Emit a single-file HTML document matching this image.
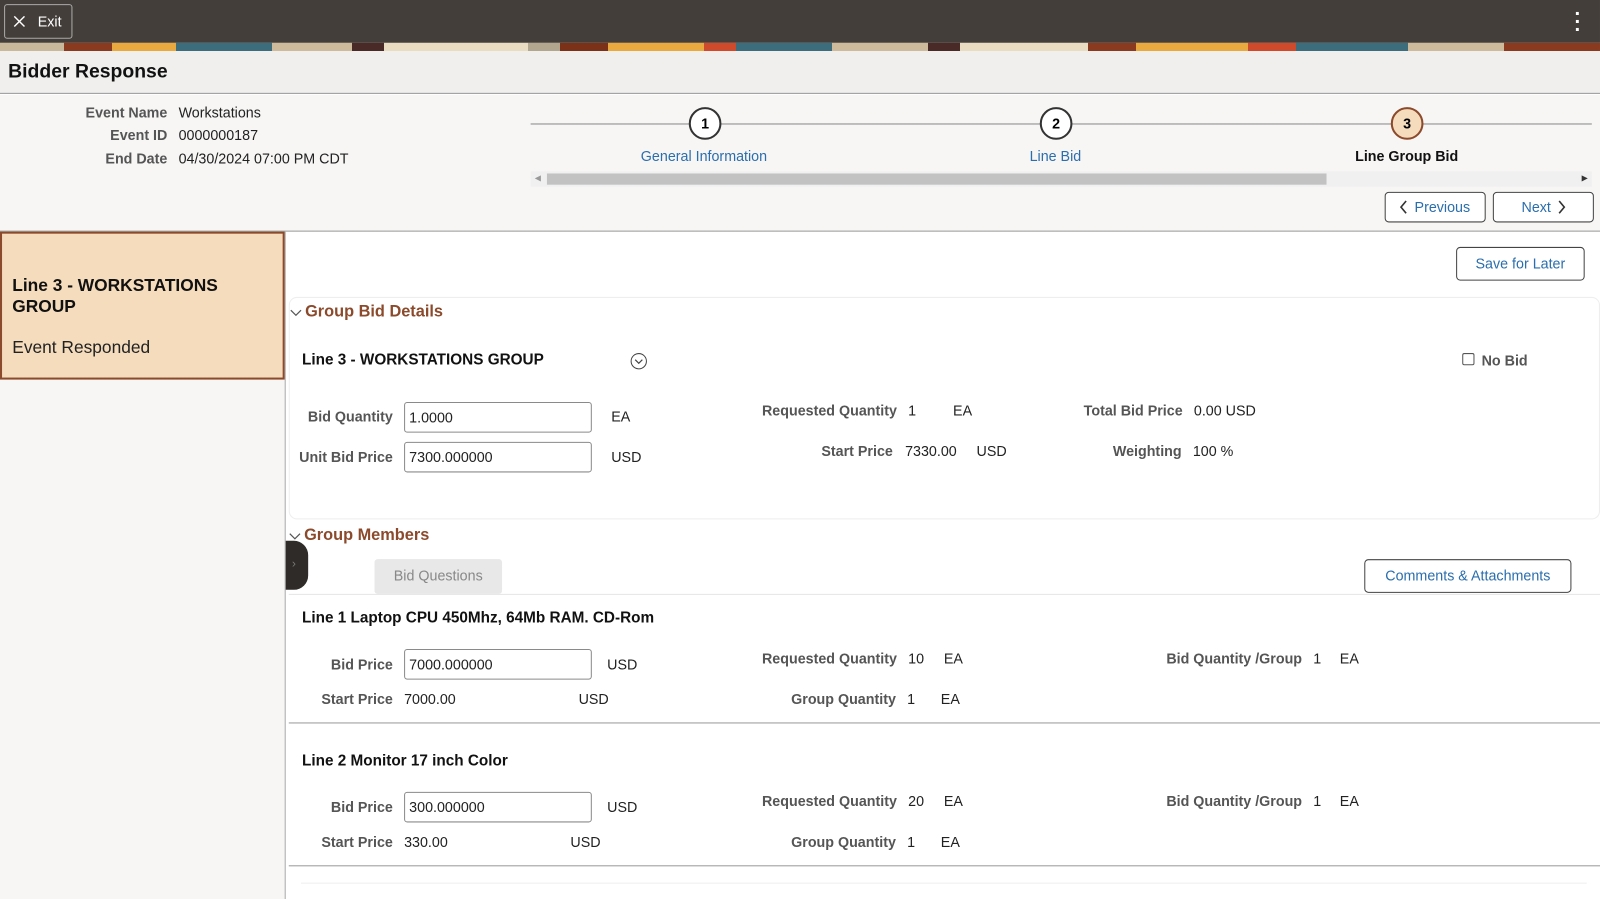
<!DOCTYPE html>
<html><head><meta charset="utf-8"><style>
*{margin:0;padding:0;box-sizing:border-box}
html,body{width:1600px;height:899px;overflow:hidden;background:#fff;font-family:"Liberation Sans",Arial,sans-serif}
#w{position:absolute;left:0;top:0;width:1568px;height:881px;transform:scale(1.0204);transform-origin:0 0;background:#fff}
.a{position:absolute;white-space:nowrap}
.lb{font-weight:bold;color:#555;font-size:14px;text-align:right}
.v{color:#222;font-size:14px}
.in{position:absolute;border:1px solid #8a8a8a;border-radius:3px;height:30px;background:#fff;font-size:14px;color:#222;padding:6px 4px}
.btn{position:absolute;border:1px solid #444;border-radius:4px;background:#fff;color:#2a6ead;font-size:14px;text-align:center}
.sec{color:#8b4a2b;font-weight:bold;font-size:16px}
.h{font-weight:bold;font-size:15px;color:#111}
</style></head><body><div id="w">
<div class="a" style="left:0;top:0;width:1568px;height:42px;background:#433e39"></div>
<div class="a" style="left:0;top:42px;width:1568px;height:8px;background:linear-gradient(90deg,#c9b89a 0 4%,#8a3a1e 4% 7%,#e9a93e 7% 11%,#3b6d7c 11% 17%,#cdbb9b 17% 22%,#4a2a26 22% 24%,#e9dcc1 24% 33%,#b2a68e 33% 35%,#7a3118 35% 38%,#e9a93e 38% 44%,#cf4a2a 44% 46%,#3b6d7c 46% 52%,#cdbb9b 52% 58%,#4a2a26 58% 60%,#e9dcc1 60% 68%,#8a3a1e 68% 71%,#e9a93e 71% 78%,#cf4a2a 78% 81%,#3b6d7c 81% 88%,#cdbb9b 88% 94%,#8a3a1e 94% 100%)"></div>
<div class="a" style="left:4px;top:4px;width:67px;height:34px;border:1px solid #aaa;border-radius:3px;color:#fff;font-size:14px;padding:8px 0 0 32px">Exit</div>
<svg class="a" style="left:13px;top:15px" width="12" height="12"><path d="M1 1L11 11M11 1L1 11" stroke="#fff" stroke-width="1.4"/></svg>
<div class="a" style="left:1543px;top:10px;color:#fff;font-size:20px;line-height:8px;font-weight:bold">·<br>·<br>·</div>
<div class="a" style="left:0;top:50px;width:1568px;height:42px;background:#f0efee;border-bottom:1px solid #999"></div>
<div class="a" style="left:8px;top:60px;font-size:19px;font-weight:bold;color:#111">Bidder Response</div>
<div class="a" style="left:0;top:93px;width:1568px;height:134px;background:#f7f6f5;border-bottom:1px solid #999"></div>
<div class="a lb" style="left:60px;top:102px;width:104px">Event Name</div><div class="a v" style="left:175px;top:102px">Workstations</div>
<div class="a lb" style="left:60px;top:124px;width:104px">Event ID</div><div class="a v" style="left:175px;top:124px">0000000187</div>
<div class="a lb" style="left:60px;top:147px;width:104px">End Date</div><div class="a v" style="left:175px;top:147px">04/30/2024 07:00 PM CDT</div>
<div class="a" style="left:520px;top:121px;width:1040px;height:1px;background:#888"></div>
<div class="a" style="left:675px;top:105px;width:32px;height:32px;border:2px solid #333;border-radius:50%;background:#fff;text-align:center;font-weight:bold;font-size:14px;line-height:28px">1</div>
<div class="a" style="left:1019px;top:105px;width:32px;height:32px;border:2px solid #333;border-radius:50%;background:#fff;text-align:center;font-weight:bold;font-size:14px;line-height:28px">2</div>
<div class="a" style="left:1363px;top:105px;width:32px;height:32px;border:2px solid #8b4a2b;border-radius:50%;background:#f5dcbd;text-align:center;font-weight:bold;font-size:14px;line-height:28px">3</div>
<div class="a" style="left:628px;top:145px;color:#2a6ead;font-size:14px">General Information</div>
<div class="a" style="left:1009px;top:145px;color:#2a6ead;font-size:14px">Line Bid</div>
<div class="a" style="left:1328px;top:145px;color:#111;font-size:14px;font-weight:bold">Line Group Bid</div>
<div class="a" style="left:520px;top:168px;width:1040px;height:15px;background:#f0f0f0"></div>
<div class="a" style="left:536px;top:170px;width:764px;height:11px;background:#c2c2c2"></div>
<div class="a" style="left:524px;top:170px;font-size:8px;color:#999">◀</div><div class="a" style="left:1550px;top:170px;font-size:8px;color:#333">▶</div>
<div class="btn" style="left:1357px;top:188px;width:99px;height:30px;line-height:28px;padding-left:14px">Previous</div>
<svg class="a" style="left:1371px;top:196px" width="10" height="14"><path d="M7 1L2 7L7 13" stroke="#333" stroke-width="1.6" fill="none"/></svg>
<div class="btn" style="left:1463px;top:188px;width:99px;height:30px;line-height:28px;padding-right:14px">Next</div>
<svg class="a" style="left:1525px;top:196px" width="10" height="14"><path d="M3 1L8 7L3 13" stroke="#333" stroke-width="1.6" fill="none"/></svg>
<div class="a" style="left:0;top:227px;width:280px;height:654px;background:#f7f6f5;border-right:1px solid #aaa"></div>
<div class="a" style="left:0;top:227px;width:279px;height:145px;background:#f5dcbd;border:2px solid #8b4a2b"></div>
<div class="a" style="left:12px;top:269px;font-size:17px;font-weight:bold;color:#111;line-height:21px">Line 3 - WORKSTATIONS<br>GROUP</div>
<div class="a" style="left:12px;top:331px;font-size:17px;color:#222">Event Responded</div>
<div class="btn" style="left:1427px;top:242px;width:126px;height:33px;line-height:31px">Save for Later</div>
<div class="a" style="left:283px;top:291px;width:1285px;height:218px;border:1px solid #eee;border-radius:8px"></div>
<svg class="a" style="left:284px;top:303px" width="12" height="8"><path d="M1 1L6 6L11 1" stroke="#555" stroke-width="1.2" fill="none"/></svg>
<div class="a sec" style="left:299px;top:297px">Group Bid Details</div>
<div class="a h" style="left:296px;top:344px">Line 3 - WORKSTATIONS GROUP</div>
<svg class="a" style="left:617px;top:345px" width="18" height="18"><circle cx="9" cy="9" r="7.5" stroke="#444" fill="none"/><path d="M5.5 7.5L9 11L12.5 7.5" stroke="#444" stroke-width="1.2" fill="none"/></svg>
<div class="a" style="left:1433px;top:346px;width:12px;height:12px;border:1px solid #555;border-radius:2px"></div>
<div class="a" style="left:1452px;top:345px;font-weight:bold;color:#555;font-size:14px">No Bid</div>
<div class="a lb" style="left:280px;top:400px;width:105px">Bid Quantity</div><div class="in" style="left:396px;top:394px;width:184px">1.0000</div><div class="a v" style="left:599px;top:400px">EA</div>
<div class="a lb" style="left:280px;top:440px;width:105px">Unit Bid Price</div><div class="in" style="left:396px;top:433px;width:184px">7300.000000</div><div class="a v" style="left:599px;top:440px">USD</div>
<div class="a lb" style="left:700px;top:394px;width:179px">Requested Quantity</div><div class="a v" style="left:890px;top:394px">1</div><div class="a v" style="left:934px;top:394px">EA</div>
<div class="a lb" style="left:700px;top:434px;width:175px">Start Price</div><div class="a v" style="left:887px;top:434px">7330.00</div><div class="a v" style="left:957px;top:434px">USD</div>
<div class="a lb" style="left:1040px;top:394px;width:119px">Total Bid Price</div><div class="a v" style="left:1170px;top:394px">0.00 USD</div>
<div class="a lb" style="left:1040px;top:434px;width:118px">Weighting</div><div class="a v" style="left:1169px;top:434px">100 %</div>
<svg class="a" style="left:283px;top:522px" width="12" height="8"><path d="M1 1L6 6L11 1" stroke="#555" stroke-width="1.2" fill="none"/></svg>
<div class="a sec" style="left:298px;top:516px">Group Members</div>
<div class="a" style="left:280px;top:530px;width:22px;height:48px;background:#2e2b28;border-radius:0 14px 14px 0;color:#777;font-size:12px;padding:15px 0 0 6px">›</div>
<div class="a" style="left:367px;top:548px;width:125px;height:34px;background:#e8e8e8;border-radius:3px;color:#888;font-size:14px;text-align:center;line-height:32px">Bid Questions</div>
<div class="btn" style="left:1337px;top:548px;width:203px;height:33px;line-height:31px">Comments &amp; Attachments</div>
<div class="a" style="left:283px;top:582px;width:1285px;height:1px;background:#e5e5e5"></div>
<div class="a h" style="left:296px;top:597px">Line 1 Laptop CPU 450Mhz, 64Mb RAM. CD-Rom</div>
<div class="a lb" style="left:280px;top:643px;width:105px">Bid Price</div><div class="in" style="left:396px;top:636px;width:184px">7000.000000</div><div class="a v" style="left:595px;top:643px">USD</div>
<div class="a lb" style="left:280px;top:677px;width:105px">Start Price</div><div class="a v" style="left:396px;top:677px">7000.00</div><div class="a v" style="left:567px;top:677px">USD</div>
<div class="a lb" style="left:700px;top:637px;width:179px">Requested Quantity</div><div class="a v" style="left:890px;top:637px">10</div><div class="a v" style="left:925px;top:637px">EA</div>
<div class="a lb" style="left:700px;top:677px;width:178px">Group Quantity</div><div class="a v" style="left:889px;top:677px">1</div><div class="a v" style="left:922px;top:677px">EA</div>
<div class="a lb" style="left:1100px;top:637px;width:176px">Bid Quantity /Group</div><div class="a v" style="left:1287px;top:637px">1</div><div class="a v" style="left:1313px;top:637px">EA</div>
<div class="a" style="left:283px;top:708px;width:1285px;height:1px;background:#999"></div>
<div class="a h" style="left:296px;top:737px">Line 2 Monitor 17 inch Color</div>
<div class="a lb" style="left:280px;top:783px;width:105px">Bid Price</div><div class="in" style="left:396px;top:776px;width:184px">300.000000</div><div class="a v" style="left:595px;top:783px">USD</div>
<div class="a lb" style="left:280px;top:817px;width:105px">Start Price</div><div class="a v" style="left:396px;top:817px">330.00</div><div class="a v" style="left:559px;top:817px">USD</div>
<div class="a lb" style="left:700px;top:777px;width:179px">Requested Quantity</div><div class="a v" style="left:890px;top:777px">20</div><div class="a v" style="left:925px;top:777px">EA</div>
<div class="a lb" style="left:700px;top:817px;width:178px">Group Quantity</div><div class="a v" style="left:889px;top:817px">1</div><div class="a v" style="left:922px;top:817px">EA</div>
<div class="a lb" style="left:1100px;top:777px;width:176px">Bid Quantity /Group</div><div class="a v" style="left:1287px;top:777px">1</div><div class="a v" style="left:1313px;top:777px">EA</div>
<div class="a" style="left:283px;top:848px;width:1285px;height:1px;background:#999"></div>
<div class="a" style="left:295px;top:865px;width:1260px;height:1px;background:#eee"></div>
</div></body></html>
